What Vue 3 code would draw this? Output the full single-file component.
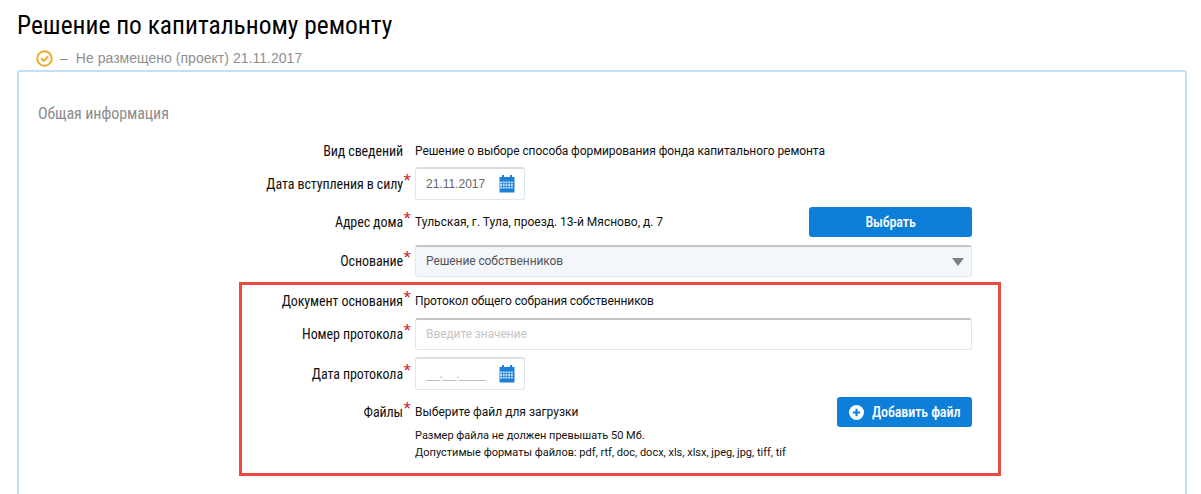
<script setup>
const cells = []
for (let y = 0; y < 3; y++) for (let x = 0; x < 5; x++) cells.push({ x: 1.5 + x * 2.7, y: 6.5 + y * 2.6 })
</script>

<template>
  <div class="page">
    <h1 class="title"><span class="cond">Решение по капитальному ремонту</span></h1>
    <div class="status">
      <svg class="status-icon" width="17" height="17" viewBox="0 0 16 16">
        <circle cx="8" cy="8" r="6.8" fill="none" stroke="#eda91f" stroke-width="1.8" />
        <path d="M4.8 7.8 7.3 10.3 11.4 6" fill="none" stroke="#eda91f" stroke-width="1.8" />
      </svg>
      <span class="dash">–</span>
      <span class="status-text">Не размещено (проект) 21.11.2017</span>
    </div>
    <section class="panel">
      <div class="annotation"></div>
      <h2 class="section"><span class="cond">Общая информация</span></h2>

      <div class="row r-info">
        <div class="label"><span class="cond">Вид сведений</span></div>
        <div class="value v-tight">Решение о выборе способа формирования фонда капитального ремонта</div>
      </div>

      <div class="row r-date1">
        <div class="label"><span class="cond">Дата вступления в силу</span><i class="star">*</i></div>
        <div class="date-box">
          <span class="date-text">21.11.2017</span>
          <svg class="cal" width="16" height="18" viewBox="0 0 16 18">
            <rect x="3" y="0" width="2" height="4" fill="#1f7fd6" />
            <rect x="11" y="0" width="2" height="4" fill="#1f7fd6" />
            <rect x="0.5" y="2" width="15" height="15.5" fill="#1f7fd6" />
            <rect v-for="(c, i) in cells" :key="i" :x="c.x - 0.4" :y="c.y" width="1.9" height="1.8" fill="#cfe3f7" />
          </svg>
        </div>
      </div>

      <div class="row r-addr">
        <div class="label"><span class="cond">Адрес дома</span><i class="star">*</i></div>
        <div class="value grow">Тульская, г. Тула, проезд. 13-й Мясново, д. 7</div>
        <button class="btn btn-pick"><span class="cond">Выбрать</span></button>
      </div>

      <div class="row r-base">
        <div class="label"><span class="cond">Основание</span><i class="star">*</i></div>
        <div class="select">
          <span>Решение собственников</span>
          <span class="arrow"></span>
        </div>
      </div>

      <div class="row r-doc">
        <div class="label"><span class="cond">Документ основания</span><i class="star">*</i></div>
        <div class="value v-tighter">Протокол общего собрания собственников</div>
      </div>

      <div class="row r-num">
        <div class="label"><span class="cond">Номер протокола</span><i class="star">*</i></div>
        <div class="text-input"><span>Введите значение</span></div>
      </div>

      <div class="row r-date2">
        <div class="label"><span class="cond">Дата протокола</span><i class="star">*</i></div>
        <div class="date-box">
          <span class="date-mask">__.__.____</span>
          <svg class="cal" width="16" height="18" viewBox="0 0 16 18">
            <rect x="3" y="0" width="2" height="4" fill="#1f7fd6" />
            <rect x="11" y="0" width="2" height="4" fill="#1f7fd6" />
            <rect x="0.5" y="2" width="15" height="15.5" fill="#1f7fd6" />
            <rect v-for="(c, i) in cells" :key="i" :x="c.x - 0.4" :y="c.y" width="1.9" height="1.8" fill="#cfe3f7" />
          </svg>
        </div>
      </div>

      <div class="row r-files">
        <div class="label"><span class="cond">Файлы</span><i class="star">*</i></div>
        <div class="value grow">Выберите файл для загрузки</div>
        <button class="btn btn-add">
          <svg class="plus" width="15" height="15" viewBox="0 0 15 15">
            <circle cx="7.5" cy="7.5" r="7.5" fill="#fff" />
            <path d="M7.5 3.8v7.4M3.8 7.5h7.4" stroke="#0e7fd8" stroke-width="2" />
          </svg>
          <span class="cond">Добавить файл</span>
        </button>
      </div>

      <div class="hints">
        <div>Размер файла не должен превышать 50 Мб.</div>
        <div>Допустимые форматы файлов: pdf, rtf, doc, docx, xls, xlsx, jpeg, jpg, tiff, tif</div>
      </div>
    </section>
  </div>
</template>

<style scoped>
.page {
  width: 1201px;
  height: 494px;
  overflow: hidden;
  box-sizing: border-box;
  padding: 10px 14px 0 17px;
  font-family: "Liberation Sans", Arial, sans-serif;
  background: #fff;
  color: #1a1a1a;
}
.cond {
  font-family: Roboto, sans-serif;
  font-stretch: condensed;
  letter-spacing: -0.1px;
}
.title {
  margin: 0;
  font-size: 25.4px;
  line-height: 30px;
  font-weight: 400;
  color: #000;
  white-space: nowrap;
}
.title .cond { letter-spacing: 0; }
.status {
  display: flex;
  align-items: center;
  height: 20px;
  margin: 8px 0 2px 19px;
  font-size: 14px;
  color: #8f8f8f;
}
.status-icon { margin-right: 7px; }
.dash { margin-right: 8px; }
.status-text { letter-spacing: 0.03px; }
.panel {
  position: relative;
  height: 500px;
  box-sizing: border-box;
  border: 2px solid #c4dff5;
  border-radius: 3px;
  padding: 0 0 0 19px;
}
.annotation {
  position: absolute;
  left: 220px;
  top: 210px;
  width: 762px;
  height: 194px;
  box-sizing: border-box;
  border: 3px solid #e94b43;
  pointer-events: none;
}
.section {
  margin: 32px 0 0;
  height: 20px;
  font-size: 16px;
  line-height: 20px;
  font-weight: 400;
  color: #8d8d8d;
}
.row {
  display: flex;
  align-items: center;
  width: 934px;
}
.label {
  position: relative;
  width: 365px;
  box-sizing: border-box;
  margin-right: 12px;
  text-align: right;
  font-size: 14px;
  line-height: 18px;
  color: #111;
  white-space: nowrap;
  flex: none;
}
.star {
  position: absolute;
  right: -8px;
  top: -5px;
  font-style: normal;
  font-family: "Liberation Sans", sans-serif;
  font-size: 19px;
  line-height: 22px;
  color: #c8262b;
}
.value {
  font-family: Roboto, sans-serif;
  font-size: 12px;
  color: #111;
  white-space: nowrap;
}
.v-tight { letter-spacing: -0.075px; }
.v-tighter { letter-spacing: -0.14px; }
.grow { flex: 1; }
.r-info { margin-top: 17px; height: 20px; }
.r-date1 { margin-top: 6px; }
.r-addr { margin-top: 7px; height: 30px; }
.r-base { margin-top: 8px; }
.r-doc { margin-top: 14px; height: 20px; }
.r-num { margin-top: 7px; }
.r-date2 { margin-top: 7px; }
.r-files { margin-top: 7px; height: 30px; }
.date-box {
  display: flex;
  align-items: center;
  justify-content: space-between;
  box-sizing: border-box;
  width: 110px;
  height: 33px;
  padding: 0 9px 0 10px;
  background: #fff;
  border: 1px solid #e1e6ec;
  border-top: 2px solid #dadde1;
  border-radius: 3px;
  font-size: 12px;
  color: #666;
}
.date-mask { color: #b5b5b5; }
.select, .text-input {
  display: flex;
  align-items: center;
  justify-content: space-between;
  box-sizing: border-box;
  width: 557px;
  height: 32px;
  padding: 0 7px 2px 10px;
  border: 1px solid #e3e7ec;
  border-top: 2px solid #c2c4c7;
  border-radius: 3px;
  font-family: Roboto, sans-serif;
  font-size: 12px;
  letter-spacing: -0.09px;
}
.select { background: #f3f6fb; color: #555; }
.text-input { background: #fff; color: #c4c4c4; }
.arrow {
  width: 0;
  height: 0;
  margin-top: 2px;
  border-left: 6px solid transparent;
  border-right: 6px solid transparent;
  border-top: 8px solid #808080;
}
.btn {
  display: flex;
  align-items: center;
  justify-content: center;
  box-sizing: border-box;
  height: 30px;
  border: 0;
  border-radius: 3px;
  background: #0e7fd8;
  color: #fff;
  font-size: 14px;
  font-weight: 500;
  padding: 0;
  flex: none;
}
.btn-pick { width: 163px; }
.btn-add { width: 135px; justify-content: flex-start; padding-left: 12px; }
.plus { flex: none; }
.btn-add .cond { margin-left: 8px; white-space: nowrap; }
.hints {
  margin: 0 0 0 377px;
  font-size: 11px;
  line-height: 17px;
  color: #111;
  font-family: Roboto, sans-serif;
}
</style>
